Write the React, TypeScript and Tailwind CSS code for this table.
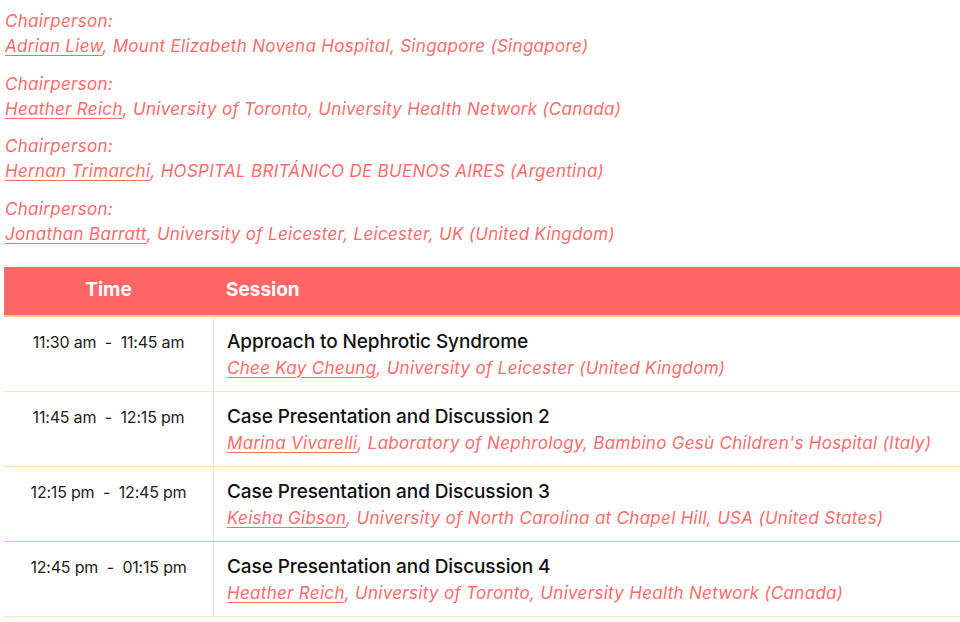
import React from "react";

const chairs = [
  { name: "Adrian Liew", rest: ", Mount Elizabeth Novena Hospital, Singapore (Singapore)" },
  { name: "Heather Reich", rest: ", University of Toronto, University Health Network (Canada)" },
  { name: "Hernan Trimarchi", rest: ", HOSPITAL BRITÁNICO DE BUENOS AIRES (Argentina)" },
  { name: "Jonathan Barratt", rest: ", University of Leicester, Leicester, UK (United Kingdom)" },
];

const rows = [
  { time: "11:30 am  -  11:45 am", title: "Approach to Nephrotic Syndrome", name: "Chee Kay Cheung", rest: ", University of Leicester (United Kingdom)" },
  { time: "11:45 am  -  12:15 pm", title: "Case Presentation and Discussion 2", name: "Marina Vivarelli", rest: ", Laboratory of Nephrology, Bambino Gesù Children's Hospital (Italy)" },
  { time: "12:15 pm  -  12:45 pm", title: "Case Presentation and Discussion 3", name: "Keisha Gibson", rest: ", University of North Carolina at Chapel Hill, USA (United States)" },
  { time: "12:45 pm  -  01:15 pm", title: "Case Presentation and Discussion 4", name: "Heather Reich", rest: ", University of Toronto, University Health Network (Canada)" },
];

export default function App() {
  return (
    <div className="w-[960px] h-[622px] overflow-hidden bg-white" style={{ fontFamily: "Inter, 'Noto Sans', sans-serif" }}>
      <div className="pl-[5px] pt-[9px]">
        {chairs.map((c) => (
          <div key={c.name} className="mb-[12.5px] text-[17px] leading-[25px] italic text-[#ff6b6b] tracking-[0.3px]">
            <div>Chairperson:</div>
            <div className="whitespace-nowrap">
              <span className="underline underline-offset-[3px] decoration-1">{c.name}</span>
              {c.rest}
            </div>
          </div>
        ))}
      </div>
      <div className="ml-[4px] mt-[20px] w-[980px]">
        <div className="flex h-[50px] bg-[#ff6666] text-white font-bold text-[19px] border-b-2 border-[#ffcf8a]">
          <div className="w-[209px] flex items-center justify-center">Time</div>
          <div className="flex-1 flex items-center pl-[13px]">Session</div>
        </div>
        {rows.map((r, i) => (
          <div
            key={r.time}
            className={i === 2 ? "flex h-[75px] border-b border-[#ffc56e]" : "flex h-[75px] border-b border-[#fde2b6]"}
          >
            <div className="w-[209px] pt-[13px] text-center text-[16px] text-[#1c1c1c] tracking-[-0.2px] whitespace-pre">
              {r.time}
            </div>
            <div className="flex-1 border-l border-[#ececec] pl-[13px] pt-[12px]">
              <div className="text-[19px] leading-[26px] font-medium text-[#111] tracking-[-0.1px]">{r.title}</div>
              <div className="text-[17px] leading-[26px] italic text-[#ff6b6b] tracking-[0.3px] whitespace-nowrap">
                <span className="underline underline-offset-[3px] decoration-1">{r.name}</span>
                {r.rest}
              </div>
            </div>
          </div>
        ))}
      </div>
    </div>
  );
}
